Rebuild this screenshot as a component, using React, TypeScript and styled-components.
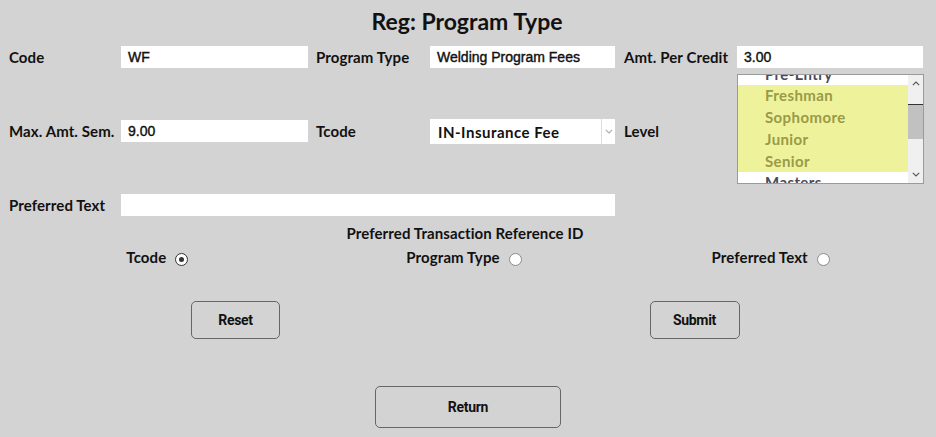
import React from "react";
import styled, { createGlobalStyle } from "styled-components";

const GlobalStyle = createGlobalStyle`
  html, body {
    margin: 0;
    padding: 0;
    background: #d3d3d3;
  }
  body {
    font-family: Lato, "Noto Sans", sans-serif;
    color: #111;
  }
`;

const Page = styled.div`
  width: 936px;
  height: 437px;
  padding-top: 8px;
  box-sizing: border-box;
  background: #d3d3d3;
  display: flex;
  flex-direction: column;
`;

const Title = styled.h1`
  margin: 0;
  font-size: 23px;
  line-height: 26px;
  font-weight: 700;
  text-align: center;
  padding-right: 2px;
`;

const FormGrid = styled.div`
  margin-top: 12px;
  padding: 0 13px 0 9px;
  display: grid;
  grid-template-columns: 112px 195px 114px 194px 113px 186px;
  grid-template-rows: 22px 114px 22px;
  row-gap: 6px;
  align-items: center;
`;

const Label = styled.label`
  font-size: 15px;
  font-weight: 700;
  letter-spacing: 0.1px;
  white-space: nowrap;
`;

const TextInput = styled.div<{ $w?: number; $span?: string }>`
  width: ${(p) => p.$w ?? 187}px;
  height: 22px;
  box-sizing: border-box;
  background: #fff;
  padding: 0 7px;
  display: flex;
  align-items: center;
  font-family: "Liberation Sans", Arial, sans-serif;
  font-size: 14px;
  font-weight: 400;
  -webkit-text-stroke: 0.4px #111;
  color: #111;
  ${(p) => (p.$span ? `grid-column: ${p.$span};` : "")}
`;

const Select = styled.div`
  width: 185px;
  height: 25px;
  box-sizing: border-box;
  background: #fff;
  display: flex;
  align-items: stretch;
`;

const SelectValue = styled.div`
  flex: 1;
  display: flex;
  align-items: center;
  padding: 2px 8px 0;
  font-size: 15px;
  letter-spacing: 0.5px;
  font-weight: 700;
  white-space: nowrap;
`;

const SelectArrow = styled.div`
  width: 13px;
  border-left: 1px solid #dcdcdc;
  display: flex;
  align-items: center;
  justify-content: center;
`;

const ListBox = styled.div`
  align-self: start;
  width: 187px;
  height: 110px;
  box-sizing: border-box;
  border: 1px solid #9a9a9a;
  background: #fff;
  display: flex;
  overflow: hidden;
`;

const ListViewport = styled.div`
  flex: 1;
  overflow: hidden;
`;

const ListInner = styled.div`
  margin-top: -11.5px;
`;

const ListItem = styled.div<{ $sel?: boolean }>`
  height: 21.75px;
  line-height: 21.75px;
  padding-left: 27px;
  font-size: 15px;
  letter-spacing: 0.4px;
  font-weight: 700;
  white-space: nowrap;
  color: ${(p) => (p.$sel ? "#9a9a47" : "#4a4a58")};
  background: ${(p) => (p.$sel ? "#eef29b" : "#fff")};
`;

const ScrollBar = styled.div`
  width: 15px;
  background: #f0f0f0;
  display: flex;
  flex-direction: column;
`;

const ScrollBtn = styled.div`
  height: 17px;
  display: flex;
  align-items: center;
  justify-content: center;
`;

const ScrollTrack = styled.div`
  flex: 1;
  display: flex;
  flex-direction: column;
`;

const Thumb = styled.div`
  margin-top: 12px;
  height: 34px;
  background: #c1c1c1;
  border-top: 1px solid #333;
`;

const CenterText = styled.div`
  margin-top: 8px;
  text-align: center;
  font-size: 15px;
  font-weight: 700;
  letter-spacing: 0.1px;
  line-height: 18px;
  padding-right: 6px;
`;

const RadioRow = styled.div`
  margin-top: 6px;
  padding: 0 12px 0 4px;
  display: grid;
  grid-template-columns: repeat(3, 1fr);
`;

const RadioGroup = styled.div`
  display: flex;
  justify-content: center;
  align-items: center;
  gap: 9px;
  font-size: 15px;
  font-weight: 700;
  letter-spacing: 0.1px;
  line-height: 18px;
`;

const Radio = styled.span<{ $on?: boolean }>`
  width: 13px;
  height: 13px;
  box-sizing: border-box;
  border-radius: 50%;
  border: 1px solid ${(p) => (p.$on ? "#333" : "#8a8a8a")};
  background: #fff;
  margin-top: 5px;
  display: flex;
  align-items: center;
  justify-content: center;
  &::after {
    content: "";
    width: 5px;
    height: 5px;
    border-radius: 50%;
    background: ${(p) => (p.$on ? "#333" : "transparent")};
  }
`;

const ButtonRow = styled.div`
  margin-top: 35px;
  padding: 0 13px 0 9px;
  display: grid;
  grid-template-columns: 1fr 1fr;
  justify-items: center;
`;

const Button = styled.button<{ $w: number; $h: number; $shift?: number }>`
  width: ${(p) => p.$w}px;
  height: ${(p) => p.$h}px;
  background: transparent;
  border: 1px solid #666;
  border-radius: 5px;
  font-family: Roboto, "Liberation Sans", sans-serif;
  font-weight: 700;
  font-size: 14px;
  letter-spacing: -0.3px;
  color: #111;
  padding: 0;
  ${(p) => (p.$shift ? `margin-left: ${p.$shift}px;` : "")}
`;

const ReturnRow = styled.div`
  margin-top: 47px;
  display: flex;
  justify-content: center;
`;

const Chevron = ({ up, color = "#555" }: { up?: boolean; color?: string }) => (
  <svg width="8" height="5" viewBox="0 0 8 5">
    <path
      d={up ? "M0.8 4.2 L4 1 L7.2 4.2" : "M0.8 0.8 L4 4 L7.2 0.8"}
      fill="none"
      stroke={color}
      strokeWidth="1.1"
    />
  </svg>
);

const levels = [
  { name: "Pre-Entry", sel: false },
  { name: "Freshman", sel: true },
  { name: "Sophomore", sel: true },
  { name: "Junior", sel: true },
  { name: "Senior", sel: true },
  { name: "Masters", sel: false },
  { name: "Doctoral", sel: false },
];

export default function App() {
  return (
    <Page>
      <GlobalStyle />
      <Title>Reg: Program Type</Title>
      <FormGrid>
        <Label>Code</Label>
        <TextInput>WF</TextInput>
        <Label>Program Type</Label>
        <TextInput $w={185}>Welding Program Fees</TextInput>
        <Label>Amt. Per Credit</Label>
        <TextInput $w={186}>3.00</TextInput>

        <Label>Max. Amt. Sem.</Label>
        <TextInput>9.00</TextInput>
        <Label>Tcode</Label>
        <Select>
          <SelectValue>IN-Insurance Fee</SelectValue>
          <SelectArrow>
            <Chevron color="#aaa" />
          </SelectArrow>
        </Select>
        <Label>Level</Label>
        <ListBox>
          <ListViewport>
            <ListInner>
              {levels.map((l) => (
                <ListItem key={l.name} $sel={l.sel}>
                  {l.name}
                </ListItem>
              ))}
            </ListInner>
          </ListViewport>
          <ScrollBar>
            <ScrollBtn>
              <Chevron up />
            </ScrollBtn>
            <ScrollTrack>
              <Thumb />
            </ScrollTrack>
            <ScrollBtn>
              <Chevron />
            </ScrollBtn>
          </ScrollBar>
        </ListBox>

        <Label>Preferred Text</Label>
        <TextInput $w={494} $span="2 / 5" />
      </FormGrid>

      <CenterText>Preferred Transaction Reference ID</CenterText>
      <RadioRow>
        <RadioGroup>
          Tcode <Radio $on />
        </RadioGroup>
        <RadioGroup>
          Program Type <Radio />
        </RadioGroup>
        <RadioGroup>
          Preferred Text <Radio />
        </RadioGroup>
      </RadioRow>

      <ButtonRow>
        <Button $w={89} $h={38} $shift={-4}>Reset</Button>
        <Button $w={90} $h={38}>Submit</Button>
      </ButtonRow>
      <ReturnRow>
        <Button $w={186} $h={42}>Return</Button>
      </ReturnRow>
    </Page>
  );
}
